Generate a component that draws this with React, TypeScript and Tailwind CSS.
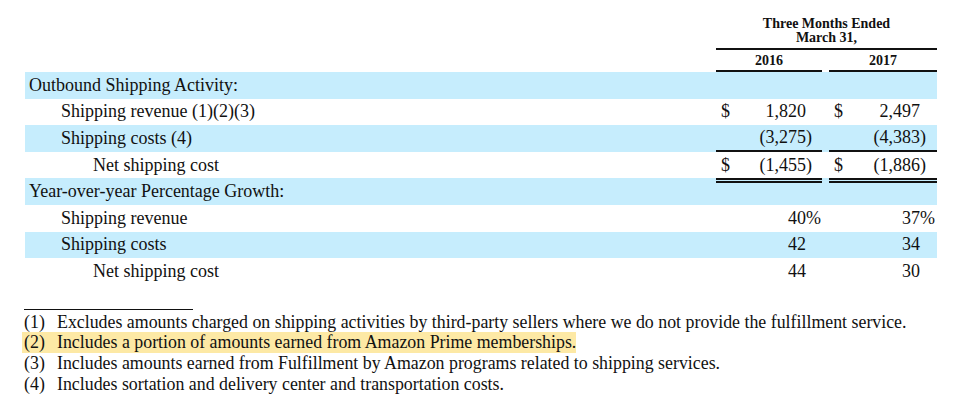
const rows = [
  { label: "Outbound Shipping Activity:", level: 0, blue: true },
  { label: "Shipping revenue (1)(2)(3)", level: 1, a: ["$", "1,820", ""], b: ["$", "2,497", ""] },
  { label: "Shipping costs (4)", level: 1, blue: true, a: ["", "(3,275", ")"], b: ["", "(4,383", ")"], line: "single" },
  { label: "Net shipping cost", level: 2, a: ["$", "(1,455", ")"], b: ["$", "(1,886", ")"] },
  { label: "Year-over-year Percentage Growth:", level: 0, blue: true, top: "double" },
  { label: "Shipping revenue", level: 1, a: ["", "40", "%"], b: ["", "37", "%"] },
  { label: "Shipping costs", level: 1, blue: true, a: ["", "42", ""], b: ["", "34", ""] },
  { label: "Net shipping cost", level: 2, a: ["", "44", ""], b: ["", "30", ""] },
];

const footnotes = [
  "Excludes amounts charged on shipping activities by third-party sellers where we do not provide the fulfillment service.",
  "Includes a portion of amounts earned from Amazon Prime memberships.",
  "Includes amounts earned from Fulfillment by Amazon programs related to shipping services.",
  "Includes sortation and delivery center and transportation costs.",
];

const indent = ["pl-[4px]", "pl-[36px]", "pl-[68px]"];

function ValueCell({ value, width, suffix, line, top }: { value?: string[]; width: string; suffix: string; line?: string; top?: string }) {
  return (
    <div
      className={`${width} h-full flex items-center pl-[5px] bg-clip-padding ${
        line === "single" ? "border-b-2 border-[#111]" : ""
      } ${top === "double" ? "border-t-[5px] border-double border-[#111]" : ""}`}
    >
      <span className="w-[12px]">{value?.[0]}</span>
      <span className="flex-1 text-right">{value?.[1]}</span>
      <span className={`${suffix} text-left`}>{value?.[2]}</span>
    </div>
  );
}

export default function App() {
  return (
    <div className="w-[965px] h-[406px] bg-white text-[#111] font-['Liberation_Serif',_'Times_New_Roman',_serif] overflow-hidden">
      <div className="pl-[25px] pr-[28px]">
        {/* Header */}
        <div className="flex h-[72px]">
          <div className="w-[691px]" />
          <div className="w-[221px] flex flex-col justify-end font-bold text-[14px]">
            <div className="text-center leading-[14px] pb-[3px]">
              <div>Three Months Ended</div>
              <div>March 31,</div>
            </div>
            <div className="border-t-2 border-[#111] flex h-[24px]">
              <div className="w-[106px] border-b-2 border-[#111] flex items-center justify-center">2016</div>
              <div className="w-[7px]" />
              <div className="w-[108px] border-b-2 border-[#111] flex items-center justify-center">2017</div>
            </div>
          </div>
        </div>

        {/* Body */}
        <div className="text-[18px]">
          {rows.map((r, i) => (
            <div key={i} className={`flex h-[26.6px] ${r.blue ? "bg-[#c6edfd]" : ""}`}>
              <div className={`w-[691px] flex items-center ${indent[r.level]}`}>{r.label}</div>
              <ValueCell value={r.a} width="w-[106px]" suffix="w-[16px]" line={r.line} top={r.top} />
              <div className="w-[7px]" />
              <ValueCell value={r.b} width="w-[108px]" suffix="w-[17px]" line={r.line} top={r.top} />
            </div>
          ))}
        </div>
      </div>

      {/* Footnotes */}
      <div className="pl-[24px] mt-[24px]">
        <div className="w-[169px] border-t border-[#111]" />
        <div className="pt-[2px] text-[17.85px]">
          {footnotes.map((f, i) => (
            <div
              key={i}
              className={`flex w-fit h-[20.7px] items-center ${i === 1 ? "bg-[#fde9a5] -ml-[2px] pl-[2px]" : ""}`}
            >
              <span className="w-[33px]">({i + 1})</span>
              <span>{f}</span>
            </div>
          ))}
        </div>
      </div>
    </div>
  );
}
